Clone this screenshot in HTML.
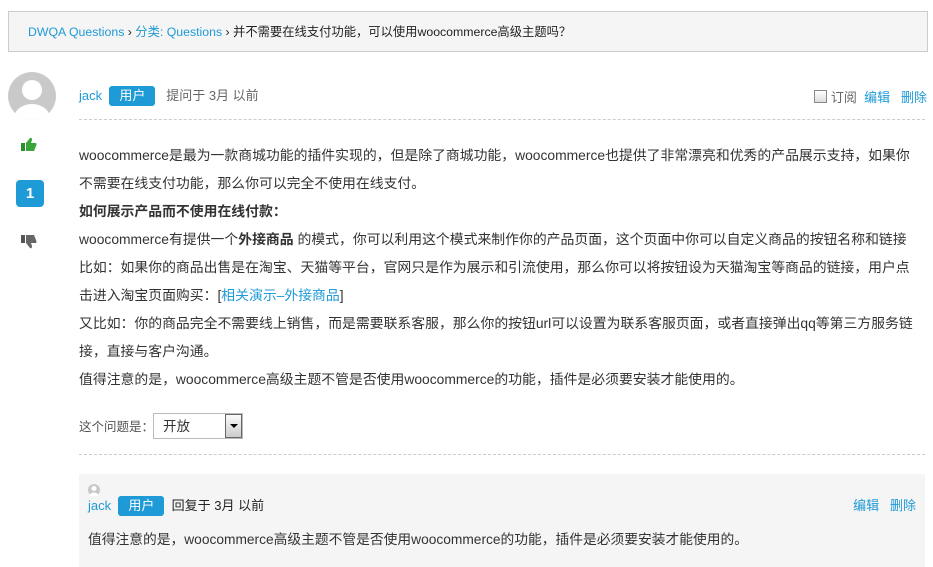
<!DOCTYPE html>
<html><head><meta charset="utf-8"><style>
body{margin:0;width:933px;height:567px;overflow:hidden;background:#fff;font-family:"Liberation Sans","Noto Sans CJK SC",sans-serif;font-size:13px;color:#333}
a{color:#1e9ad6;text-decoration:none}
.bc{position:absolute;left:8px;top:11px;width:918px;height:39px;background:#f5f5f5;border:1px solid #ccc;line-height:41px;font-size:12.3px;color:#222}
.bc span{padding-left:19px}
.av{position:absolute;left:8px;top:72px;width:48px;height:48px;border-radius:50%;background:#c9c9c9;overflow:hidden}
.tag{display:inline-block;background:#1e9ad6;color:#fff;border-radius:3px;padding:0 10px;height:20px;line-height:20px;font-size:13px}
.meta{position:absolute;left:79px;top:86px;line-height:20px;color:#666;font-size:13px}
.dash{position:absolute;left:79px;width:846px;border-top:1px dashed #ccc}
.body{position:absolute;left:79px;top:141px;width:860px;line-height:28px;font-size:13.85px;color:#333;white-space:nowrap}
.body p{margin:0}
</style></head><body>
<div class="bc"><span><a href="#">DWQA Questions</a> › <a href="#">分类: Questions</a> › 并不需要在线支付功能，可以使用woocommerce高级主题吗？</span></div>
<div class="av"><svg width="48" height="48"><circle cx="24" cy="18" r="10" fill="#fff"/><ellipse cx="24" cy="46" rx="18" ry="14" fill="#fff"/></svg></div>
<svg style="position:absolute;left:21px;top:137px" width="16" height="15"><rect x="0" y="6" width="4" height="8" fill="#2e8b2e"/><path d="M5 6 L9 1 Q11 0 11 3 L10 6 L15 6 Q16 7 15 9 L13 14 L5 14Z" fill="#3aa53a"/></svg>
<div style="position:absolute;left:16px;top:180px;width:28px;height:27px;background:#1e9ad6;border-radius:4px;color:#fff;font-weight:bold;font-size:15px;text-align:center;line-height:27px">1</div>
<svg style="position:absolute;left:21px;top:234px" width="16" height="15"><rect x="0" y="1" width="4" height="8" fill="#555"/><path d="M5 9 L9 14 Q11 15 11 12 L10 9 L15 9 Q16 8 15 6 L13 1 L5 1Z" fill="#666"/></svg>
<div class="meta"><a href="#">jack</a> &nbsp;<span class="tag">用户</span> &nbsp; 提问于 3月 以前</div>
<div style="position:absolute;right:6px;top:89px;font-size:13px;color:#666;line-height:18px"><span style="display:inline-block;width:11px;height:11px;border:1px solid #888;background:linear-gradient(#fff,#ddd);vertical-align:-1px"></span> 订阅 &nbsp;<a href="#">编辑</a> &nbsp; <a href="#">删除</a></div>
<div class="dash" style="top:119px"></div>
<div class="body">
<p>woocommerce是最为一款商城功能的插件实现的，但是除了商城功能，woocommerce也提供了非常漂亮和优秀的产品展示支持，如果你<br>不需要在线支付功能，那么你可以完全不使用在线支付。</p>
<p><b>如何展示产品而不使用在线付款：</b></p>
<p>woocommerce有提供一个<b>外接商品</b> 的模式，你可以利用这个模式来制作你的产品页面，这个页面中你可以自定义商品的按钮名称和链接</p>
<p>比如：如果你的商品出售是在淘宝、天猫等平台，官网只是作为展示和引流使用，那么你可以将按钮设为天猫淘宝等商品的链接，用户点<br>击进入淘宝页面购买：[<a href="#">相关演示–外接商品</a>]</p>
<p>又比如：你的商品完全不需要线上销售，而是需要联系客服，那么你的按钮url可以设置为联系客服页面，或者直接弹出qq等第三方服务链<br>接，直接与客户沟通。</p>
<p>值得注意的是，woocommerce高级主题不管是否使用woocommerce的功能，插件是必须要安装才能使用的。</p>
</div>
<div style="position:absolute;left:79px;top:416px;font-size:12.5px;color:#555;line-height:22px">这个问题是：</div>
<div style="position:absolute;left:153px;top:413px;width:88px;height:24px;border:1px solid #bbb;background:#fff;font-size:13.5px;line-height:26px"><span style="padding-left:9px">开放</span><div style="position:absolute;right:0;top:0;width:15px;height:22px;border:1px solid #666;background:linear-gradient(#fafafa,#ccc)"><div style="position:absolute;left:4px;top:9px;border:4px solid transparent;border-top:4px solid #000;border-bottom:0"></div></div></div>
<div class="dash" style="top:454px"></div>
<div style="position:absolute;left:79px;top:474px;width:846px;height:93px;background:#f5f5f5">
<svg style="position:absolute;left:9px;top:10px" width="12" height="12"><circle cx="6" cy="6" r="6" fill="#c9c9c9"/><circle cx="6" cy="4.5" r="2.5" fill="#fff"/><ellipse cx="6" cy="12" rx="4.5" ry="3.5" fill="#fff"/></svg>
<div style="position:absolute;left:9px;top:22px;line-height:20px;font-size:13px"><a href="#">jack</a> &nbsp;<span class="tag">用户</span> &nbsp;<span style="color:#222">回复于 3月 以前</span></div>
<div style="position:absolute;right:9px;top:22px;line-height:20px"><a href="#">编辑</a> &nbsp; <a href="#">删除</a></div>
<div style="position:absolute;left:9px;top:52px;line-height:28px;font-size:13.75px;white-space:nowrap">值得注意的是，woocommerce高级主题不管是否使用woocommerce的功能，插件是必须要安装才能使用的。</div>
</div>
</body></html>
